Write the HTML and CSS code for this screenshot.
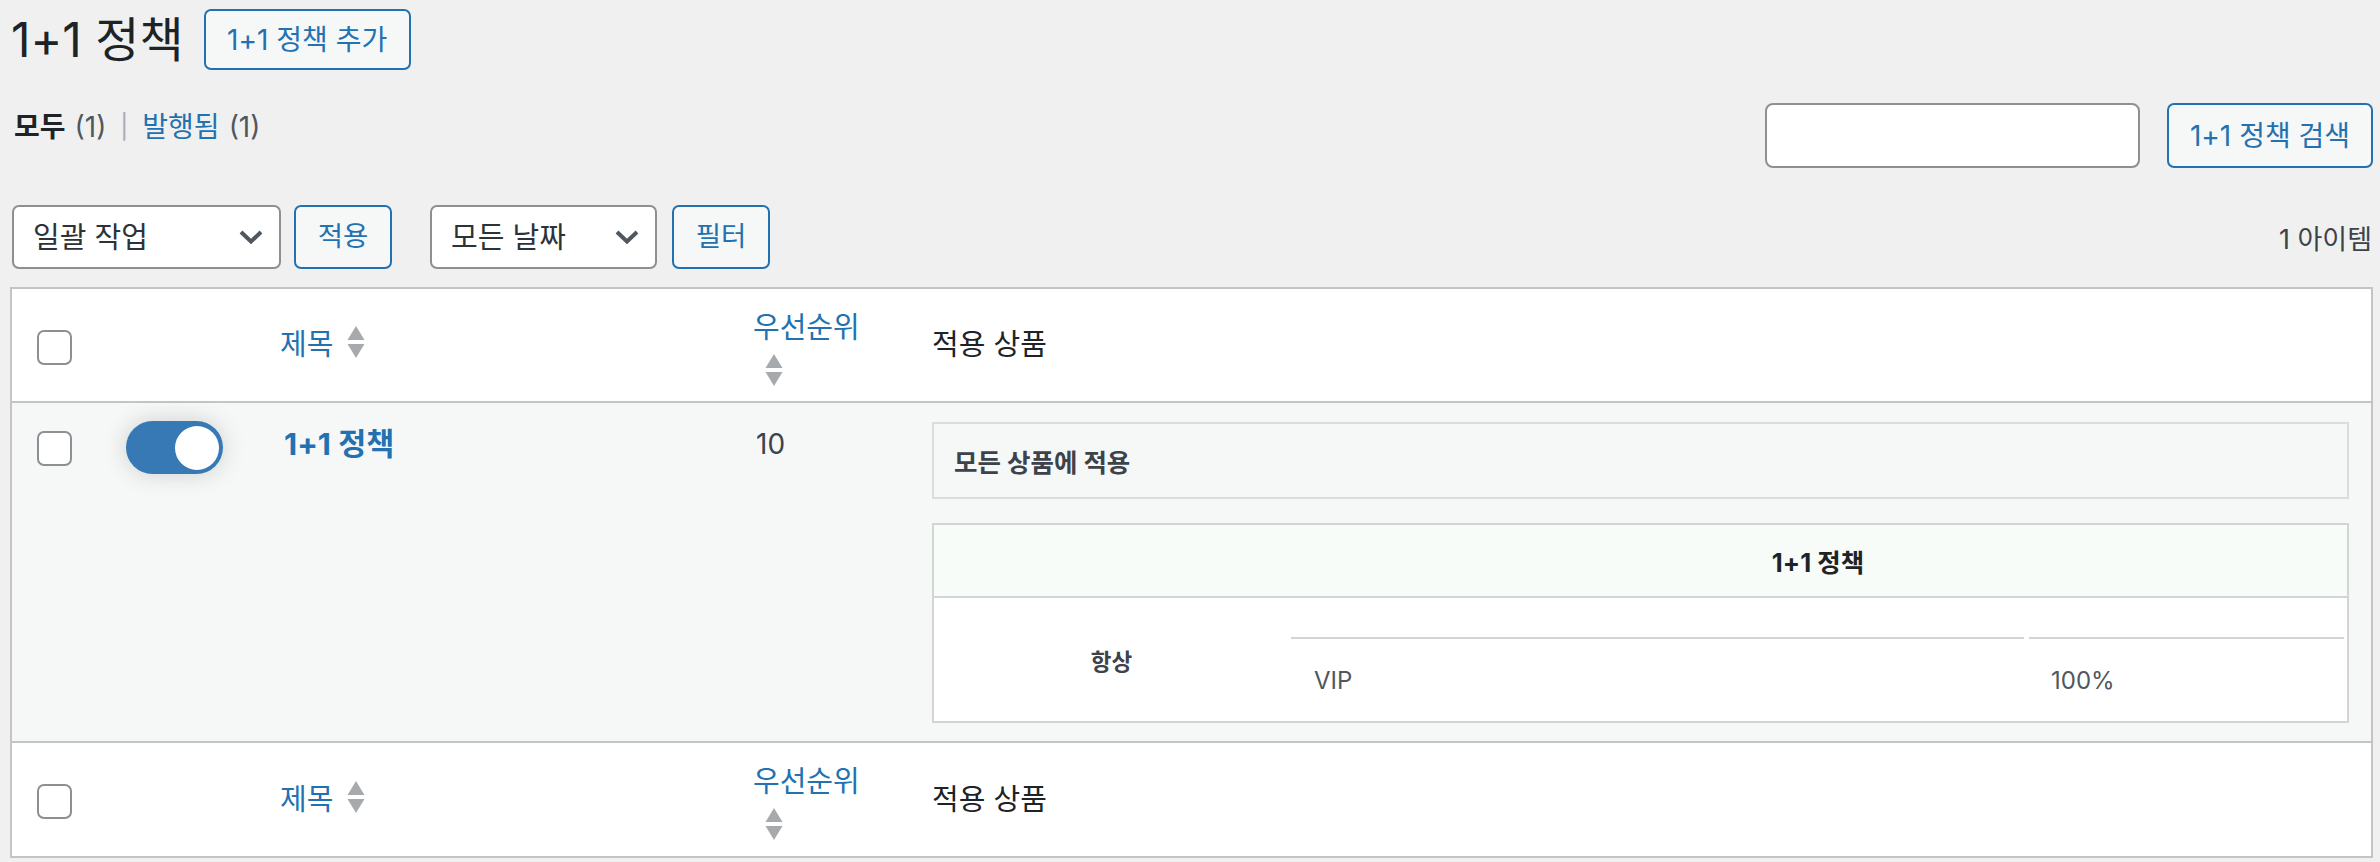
FILE: index.html
```html
<!DOCTYPE html>
<html lang="ko">
<head>
<meta charset="utf-8">
<title>1+1 정책</title>
<link rel="stylesheet" href="styles.css">
</head>
<body>
<div class="wrap">
  <div class="title-row">
    <h1 class="title">1+1 정책</h1>
    <a class="btn btn-add">1+1 정책 추가</a>
  </div>

  <div class="filter-row">
    <ul class="views">
      <li><b class="current">모두</b> <span class="count">(1)</span></li>
      <li class="sep">|</li>
      <li><a class="link">발행됨</a> <span class="count">(1)</span></li>
    </ul>
    <div class="search-box">
      <input class="search-input" type="search" aria-label="검색">
      <button class="btn btn-search">1+1 정책 검색</button>
    </div>
  </div>

  <div class="tablenav">
    <div class="select select-bulk">
      <span>일괄 작업</span>
      <svg class="chev" width="24" height="14" viewBox="0 0 24 14"><path d="M2 2 L12 11.5 L22 2" stroke="#50575e" stroke-width="4" fill="none"/></svg>
    </div>
    <button class="btn btn-small btn-apply">적용</button>
    <div class="select select-date">
      <span>모든 날짜</span>
      <svg class="chev" width="24" height="14" viewBox="0 0 24 14"><path d="M2 2 L12 11.5 L22 2" stroke="#50575e" stroke-width="4" fill="none"/></svg>
    </div>
    <button class="btn btn-small btn-filter">필터</button>
    <div class="items">1 아이템</div>
  </div>

  <div class="list">
    <div class="row row-head">
      <div class="c-cb"><span class="cb"></span></div>
      <div class="c-toggle"></div>
      <div class="c-title"><a class="link">제목</a><svg class="sort" width="18" height="34" viewBox="0 0 18 34"><path d="M9 0 L17.5 14 H0.5 Z" fill="#a7aaad"/><path d="M0.5 18 H17.5 L9 32 Z" fill="#a7aaad"/></svg></div>
      <div class="c-pri"><a class="link">우선순위</a><svg class="sort sort-below" width="18" height="34" viewBox="0 0 18 34"><path d="M9 0 L17.5 14 H0.5 Z" fill="#a7aaad"/><path d="M0.5 18 H17.5 L9 32 Z" fill="#a7aaad"/></svg></div>
      <div class="c-prod">적용 상품</div>
    </div>

    <div class="row row-item">
      <div class="c-cb"><span class="cb"></span></div>
      <div class="c-toggle"><span class="toggle"><span class="knob"></span></span></div>
      <div class="c-title"><a class="link row-title">1+1 정책</a></div>
      <div class="c-pri"><span class="num">10</span></div>
      <div class="c-prod">
        <div class="applies">모든 상품에 적용</div>
        <div class="rules">
          <div class="rules-head">
            <div></div>
            <div class="rules-name">1+1 정책</div>
          </div>
          <div class="rules-body">
            <div class="rules-when">항상</div>
            <div class="tiers">
              <div class="tier-th"></div>
              <div class="tier-th"></div>
              <div class="tier-td">VIP</div>
              <div class="tier-td">100%</div>
            </div>
          </div>
        </div>
      </div>
    </div>

    <div class="row row-head row-foot">
      <div class="c-cb"><span class="cb"></span></div>
      <div class="c-toggle"></div>
      <div class="c-title"><a class="link">제목</a><svg class="sort" width="18" height="34" viewBox="0 0 18 34"><path d="M9 0 L17.5 14 H0.5 Z" fill="#a7aaad"/><path d="M0.5 18 H17.5 L9 32 Z" fill="#a7aaad"/></svg></div>
      <div class="c-pri"><a class="link">우선순위</a><svg class="sort sort-below" width="18" height="34" viewBox="0 0 18 34"><path d="M9 0 L17.5 14 H0.5 Z" fill="#a7aaad"/><path d="M0.5 18 H17.5 L9 32 Z" fill="#a7aaad"/></svg></div>
      <div class="c-prod">적용 상품</div>
    </div>
  </div>
</div>
</body>
</html>
```

FILE: styles.css
```css
* { box-sizing: border-box; }

html, body {
  margin: 0;
  padding: 0;
  background: #f0f0f1;
}

body {
  font-family: "Inter", "Noto Sans CJK KR", sans-serif;
  color: #3c434a;
  font-size: 28px;
}

.wrap {
  padding: 9px 7px 0 10px;
}

.link {
  color: #2271b1;
  text-decoration: none;
}

/* title row */
.title-row {
  display: flex;
  align-items: center;
  gap: 20px;
  height: 61px;
}

.title {
  margin: 0;
  font-size: 48px;
  font-weight: 400;
  line-height: 1;
  color: #1d2327;
  padding-left: 1px;
}

.btn {
  display: inline-flex;
  align-items: center;
  justify-content: center;
  border: 2px solid #2271b1;
  border-radius: 7px;
  background: #f6f7f7;
  color: #2271b1;
  font-family: inherit;
  font-size: 28px;
  line-height: 1;
  padding: 0;
  margin: 0;
}

.btn-add {
  width: 207px;
  height: 61px;
}

/* views + search */
.filter-row {
  display: flex;
  justify-content: space-between;
  align-items: flex-start;
  margin-top: 33px;
  height: 65px;
}

.views {
  list-style: none;
  margin: 5px 0 0 4px;
  padding: 0;
  display: flex;
  gap: 14px;
  font-size: 28px;
  line-height: 38px;
}

.views li {
  display: flex;
  gap: 9px;
}

.current {
  color: #1d2327;
  font-weight: 600;
}

.count {
  color: #50575e;
}

.sep {
  color: #a7aaad;
  font-size: 24px;
}

.search-box {
  display: flex;
  gap: 27px;
}

.search-input {
  width: 375px;
  height: 65px;
  border: 2px solid #8c8f94;
  border-radius: 8px;
  background: #fff;
  margin: 0;
  padding: 0 16px;
  font: inherit;
  outline: none;
}

.btn-search {
  width: 206px;
  height: 65px;
}

/* tablenav */
.tablenav {
  display: flex;
  align-items: center;
  margin-top: 37px;
  height: 64px;
  padding-left: 2px;
}

.select {
  display: flex;
  align-items: center;
  justify-content: space-between;
  height: 64px;
  border: 2px solid #8c8f94;
  border-radius: 7px;
  background: #fff;
  color: #2c3338;
  font-size: 29px;
  line-height: 1;
  padding: 0 16px 0 19px;
}

.select-bulk {
  width: 269px;
}

.select-date {
  width: 227px;
  margin-left: 38px;
}

.btn-small {
  width: 98px;
  height: 64px;
  font-size: 27.5px;
}

.btn-apply {
  margin-left: 13px;
}

.btn-filter {
  margin-left: 15px;
}

.items {
  margin-left: auto;
  margin-right: 1px;
  font-size: 27px;
  color: #3c434a;
}

/* list table */
.list {
  margin-top: 18px;
  border: 2px solid #c3c4c7;
  background: #fff;
}

.row {
  display: grid;
  grid-template-columns: 98px 148px 477px 175px 1fr;
}

.row-head {
  height: 112px;
  align-items: center;
  font-size: 29px;
  line-height: 32px;
}

.c-cb {
  padding-left: 25px;
}

.cb {
  display: block;
  width: 35px;
  height: 35px;
  border: 2px solid #8c8f94;
  border-radius: 7px;
  background: #fff;
}

.row-head .c-cb {
  padding-top: 4px;
}

.row-head .c-title {
  display: flex;
  align-items: center;
  padding-left: 22px;
}

.sort {
  display: block;
  margin-left: 14px;
  margin-top: -4px;
}

.row-head .c-pri {
  align-self: start;
  padding-top: 23px;
  padding-left: 18px;
  display: flex;
  flex-direction: column;
  align-items: flex-start;
}

.sort-below {
  margin-left: 12px;
  margin-top: 10px;
}

.row-head .c-prod {
  padding-left: 22px;
  color: #1d2327;
}

.row-item {
  background: #f6f7f7;
  border-top: 2px solid #c3c4c7;
  border-bottom: 2px solid #c3c4c7;
  align-items: start;
}

.row-item .c-cb {
  padding-top: 28px;
}

.row-item .c-toggle {
  padding-top: 18px;
  padding-left: 16px;
}

.toggle {
  display: flex;
  align-items: center;
  justify-content: flex-end;
  width: 97px;
  height: 53px;
  border-radius: 27px;
  background: #3679b5;
  padding-right: 4px;
  box-shadow: 0 0 24px rgba(0, 0, 0, 0.16);
}

.knob {
  display: block;
  width: 44px;
  height: 44px;
  border-radius: 50%;
  background: #fff;
}

.row-item .c-title {
  padding-top: 22px;
  padding-left: 26px;
  line-height: 38px;
}

.row-title {
  font-size: 30.5px;
  font-weight: 700;
}

.row-item .c-pri {
  padding-top: 22px;
  padding-left: 21px;
  line-height: 38px;
  font-size: 28px;
  color: #3c434a;
}

.row-item .c-prod {
  padding: 19px 22px 18px 22px;
}

.applies {
  display: flex;
  align-items: center;
  height: 77px;
  border: 2px solid #dcdcde;
  background: #f6f7f7;
  padding-left: 20px;
  font-size: 25.5px;
  font-weight: 700;
  color: #3c434a;
}

.rules {
  margin-top: 24px;
  border: 2px solid #d3d4d6;
  background: #fff;
}

.rules-head {
  display: grid;
  grid-template-columns: 355px 1fr;
  height: 73px;
  background: #f8fcf8;
  border-bottom: 2px solid #d3d4d6;
}

.rules-name {
  display: flex;
  align-items: center;
  justify-content: center;
  font-size: 25.5px;
  font-weight: 700;
  color: #1d2327;
}

.rules-body {
  display: grid;
  grid-template-columns: 355px 1fr;
  height: 123px;
}

.rules-when {
  display: flex;
  align-items: center;
  justify-content: center;
  font-size: 22.5px;
  font-weight: 700;
  color: #3c434a;
}

.tiers {
  display: grid;
  grid-template-columns: 733px 1fr;
  grid-template-rows: 41px 1fr;
  column-gap: 5px;
  padding: 0 3px 0 2px;
}

.tier-th {
  border-bottom: 2px solid #d3d4d6;
}

.tier-td {
  display: flex;
  align-items: center;
  padding-left: 23px;
  font-size: 24px;
  color: #50575e;
}

.tier-td + .tier-td {
  padding-left: 22px;
}

.row-foot {
  height: 113px;
}
```
